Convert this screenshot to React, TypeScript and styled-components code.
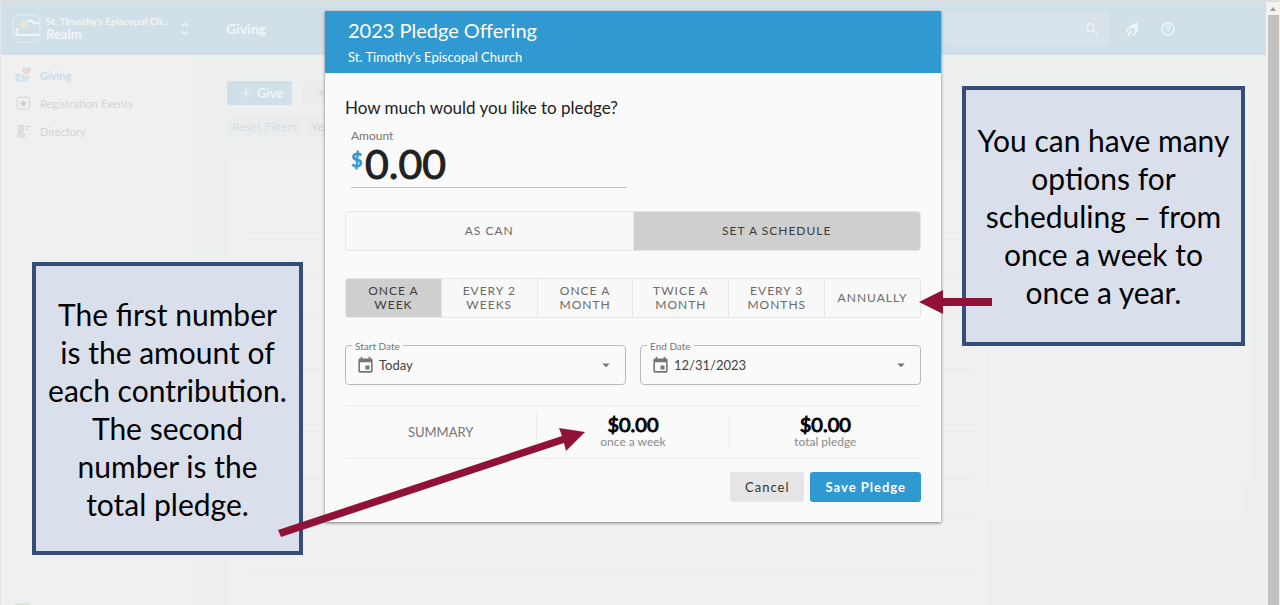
import React from 'react';
import styled, { createGlobalStyle, css } from 'styled-components';
import { MdEvent, MdArrowDropDown, MdSearch, MdHelpOutline, MdAdd } from 'react-icons/md';

const Global = createGlobalStyle`
  *, *::before, *::after { box-sizing: border-box; }
  body { margin: 0; overflow: hidden; font-family: Lato, "Liberation Sans", sans-serif; background: #f0f0f0; }
  button, input, select { font: inherit; margin: 0; }
  h1, h2, p { margin: 0; }
`;

const Screen = styled.div`
  position: relative;
  display: flex;
  min-height: 100vh;
  border-top: 2px solid #dcdfe0;
`;
const Shell = styled.div`
  flex: 1;
  display: flex;
  min-width: 0;
`;
const Sidebar = styled.aside`
  width: 199px;
  flex: none;
  display: flex;
  flex-direction: column;
  background: #f0f0f0;
  border-left: 1px solid #e4e6e6;
`;
const Brand = styled.div`
  height: 53px;
  display: flex;
  align-items: center;
  gap: 5px;
  padding: 0 10px 0 11px;
  background: #d1e0e8;
  color: #f2f5f6;
`;
const BrandText = styled.div`
  flex: 1;
  min-width: 0;
  font-weight: 700;
`;
const BrandOrg = styled.div`
  font-size: 10px;
  line-height: 12px;
  white-space: nowrap;
`;
const BrandName = styled.div`
  font-size: 13px;
  line-height: 15px;
`;
const Nav = styled.nav`
  display: flex;
  flex-direction: column;
  padding: 6px 14px;
`;
const NavLink = styled.a<{ $active?: boolean }>`
  display: flex;
  align-items: center;
  gap: 9px;
  height: 28px;
  font-size: 11px;
  text-decoration: none;
  color: ${(p) => (p.$active ? '#cadbe6' : '#d3d3d3')};
  font-weight: ${(p) => (p.$active ? 700 : 400)};
`;
const Swatch = styled.div`
  width: 15px;
  height: 2px;
  margin: auto 14px 0;
  background: #dfe6d2;
`;
const Main = styled.main`
  flex: 1;
  min-width: 0;
  display: flex;
  flex-direction: column;
  background: #eef0ef;
`;
const TopBar = styled.header`
  height: 53px;
  display: flex;
  align-items: center;
  padding: 0 90px 0 27px;
  background: #d1e0e8;
  color: #f2f5f6;
`;
const PageTitle = styled.h1`
  width: 200px;
  font-size: 14px;
  line-height: 18px;
`;
const Search = styled.div`
  flex: 1;
  height: 34px;
  display: flex;
  align-items: center;
  padding-right: 9px;
  border-radius: 5px;
  background: #d7e2ea;
`;
const SearchInput = styled.input`
  flex: 1;
  border: 0;
  background: none;
`;
const TopIcons = styled.div`
  display: flex;
  align-items: center;
  gap: 20px;
  padding-left: 15px;
`;
const Content = styled.div`
  flex: 1;
  display: flex;
  flex-direction: column;
  padding: 26px 13px 0 27px;
  border-left: 1px solid #ebecec;
`;
const Tools = styled.div`
  display: flex;
  gap: 10px;
  margin-bottom: 10px;
`;
const GiveButton = styled.button<{ $muted?: boolean }>`
  display: flex;
  align-items: center;
  gap: 4px;
  width: 65px;
  height: 24px;
  padding: 0 0 0 12px;
  border: 0;
  border-radius: 2px;
  font-size: 13px;
  font-weight: 700;
  background: ${(p) => (p.$muted ? '#ececec' : '#d1e0e8')};
  color: ${(p) => (p.$muted ? '#d8d8d8' : '#f2f5f6')};
`;
const Filters = styled.div`
  display: flex;
  gap: 4px;
  margin-bottom: 16px;
`;
const FilterButton = styled.button<{ $plain?: boolean }>`
  height: 22px;
  padding: 0 5px;
  border: 0;
  border-radius: 2px;
  background: #ebedec;
  font-size: 12px;
  color: ${(p) => (p.$plain ? '#d2d2d2' : '#d0dee6')};
`;
const Cards = styled.div`
  flex: 1;
  display: flex;
`;
const TableCard = styled.section`
  flex: 1;
  padding: 13px 14px 0 20px;
  border: 1px solid #ebecec;
  border-bottom: 0;
  border-radius: 6px 0 0 0;
  background: #f0f0f0;
`;
const SideColumn = styled.div`
  width: 264px;
  margin-left: -1px;
`;
const SideCard = styled.section`
  height: 331px;
  border-top: 1px solid #ebecec;
  border-radius: 0 6px 6px 0;
  background: #f0f0f0;
  box-shadow: 0 1px 2px #e6e8e7;
`;
const SideFoot = styled.div`
  position: relative;
  height: 33px;
  margin-right: 10px;
  background: #f0f0f0;
`;
const Row = styled.div<{ $h: number; $head?: boolean }>`
  height: ${(p) => p.$h}px;
  border-bottom: 1px solid #ebecec;
  background: ${(p) => (p.$head ? '#eef0f2' : 'none')};
`;
const ScrollRail = styled.div`
  width: 14px;
  display: flex;
  flex-direction: column;
  align-items: center;
  padding: 0 1px;
  background: #f2f2f2;
`;
const ScrollThumb = styled.div`
  flex: 1;
  width: 11px;
  background: #c1c1c1;
`;
const ScrollArrow = styled.svg`
  width: 12px;
  height: 13px;
  fill: #9a9a9a;
`;

const Overlay = styled.div`
  position: absolute;
  inset: 0 14px 0 0;
  display: flex;
  justify-content: center;
  align-items: flex-start;
  padding-top: 9px;
`;
const Stage = styled.div`
  position: relative;
  width: 616px;
`;
const Dialog = styled.form`
  background: #fafafa;
  box-shadow: 0 1px 3px rgba(0, 0, 0, 0.5);
`;
const DialogHead = styled.header`
  height: 62px;
  padding: 6px 23px 0;
  background: #3099d1;
  color: #fff;
`;
const DialogTitle = styled.h2`
  font-size: 20px;
  line-height: 26px;
  font-weight: 400;
`;
const DialogSub = styled.p`
  font-size: 13px;
  line-height: 28px;
`;
const DialogBody = styled.div`
  padding: 24px 20px 20px;
`;
const Question = styled.p`
  font-size: 17px;
  line-height: 22px;
  color: #212121;
`;
const AmountField = styled.label`
  display: block;
  width: 276px;
  margin: 10px 0 23px 6px;
  border-bottom: 1px solid #bdbdbd;
  font-size: 12px;
  line-height: 14px;
  color: #757575;
`;
const AmountRow = styled.span`
  display: flex;
  height: 44px;
`;
const Dollar = styled.span`
  width: 14px;
  font-size: 20px;
  line-height: 32px;
  color: #3099d1;
  -webkit-text-stroke: 1px #3099d1;
`;
const AmountInput = styled.input`
  flex: 1;
  min-width: 0;
  height: 42px;
  padding: 0;
  border: 0;
  background: none;
  color: #212121;
  font-size: 41px;
  line-height: 42px;
  -webkit-text-stroke: 1px #212121;
`;
const Toggle = styled.div`
  display: flex;
  height: 40px;
  margin-bottom: 27px;
  border: 1px solid #e6e6e6;
  border-radius: 3px;
  overflow: hidden;
`;
const ToggleButton = styled.button<{ $on?: boolean }>`
  flex: 1 1 0;
  padding: 0 12px;
  border: 0;
  font-size: 12px;
  line-height: 14px;
  letter-spacing: 1px;
  text-transform: uppercase;
  color: #6b6b6b;
  background: #f8f8f8;
  & + & { border-left: 1px solid #e6e6e6; }
  ${(p) => p.$on && css`
    background: #cfcfcf;
    color: #3c3c3c;
  `}
`;
const Dates = styled.div`
  display: flex;
  gap: 14px;
  margin-bottom: 20px;
`;
const DateField = styled.div`
  position: relative;
  flex: 1;
  height: 40px;
  display: flex;
  align-items: center;
  gap: 4px;
  padding: 0 10px;
  border: 1px solid #bababa;
  border-radius: 4px;
  color: #757575;
`;
const DateLabel = styled.label`
  position: absolute;
  top: -7px;
  left: 6px;
  padding: 0 3px;
  font-size: 10px;
  line-height: 14px;
  background: #fafafa;
`;
const DateSelect = styled.select`
  appearance: none;
  flex: 1;
  padding: 0;
  border: 0;
  background: none;
  font-size: 13px;
  color: #424242;
`;
const Summary = styled.div`
  display: flex;
  align-items: center;
  height: 54px;
  margin-bottom: 13px;
  border-top: 1px solid #ebebeb;
  border-bottom: 1px solid #ebebeb;
`;
const SummaryCell = styled.div`
  flex: 1 1 0;
  display: flex;
  flex-direction: column;
  align-items: center;
  justify-content: center;
  height: 38px;
  font-size: 13px;
  color: #757575;
  & + & { border-left: 1px solid #ebebeb; }
`;
const Total = styled.strong`
  font-size: 20px;
  line-height: 20px;
  font-weight: 400;
  color: #000;
  -webkit-text-stroke: 1px #000;
`;
const TotalNote = styled.span`
  font-size: 12px;
  line-height: 16px;
  color: #8a8a8a;
`;
const Actions = styled.div`
  display: flex;
  justify-content: flex-end;
  gap: 6px;
`;
const ActionButton = styled.button<{ $primary?: boolean }>`
  height: 30px;
  padding: 0 15px;
  border: 0;
  border-radius: 3px;
  font-size: 13px;
  letter-spacing: 1px;
  background: ${(p) => (p.$primary ? '#3099d1' : '#e5e5e5')};
  color: ${(p) => (p.$primary ? '#fff' : '#333')};
  font-weight: ${(p) => (p.$primary ? 700 : 400)};
`;

const Callout = styled.aside<{ $x: number; $y: number; $w: number; $h: number }>`
  position: absolute;
  left: ${(p) => p.$x}px;
  top: ${(p) => p.$y}px;
  width: ${(p) => p.$w}px;
  height: ${(p) => p.$h}px;
  display: flex;
  align-items: center;
  justify-content: center;
  border: 4px solid #344e78;
  background: #d9e0ec;
  color: #000;
  font-family: "Gill Sans MT", "Gill Sans", Lato, sans-serif;
  font-size: 30px;
  line-height: 38px;
  text-align: center;
  white-space: pre-line;
`;
const Arrows = styled.svg`
  position: absolute;
  left: 0;
  top: 0;
  width: 616px;
  height: 510px;
  overflow: visible;
  fill: #911237;
  pointer-events: none;
`;

const RealmLogo = () => (
  <svg width="29" height="29" viewBox="0 0 29 29" fill="none">
    <rect x="1" y="1" width="27" height="27" rx="6" stroke="#e6edf1" />
    <path d="M14 8c4-3 7-1 8 1.500 2-1 4-.5 5 .5M7 15c-4 1-4 6 0 6h20" stroke="#f2f5f6" strokeWidth="2" />
    <path d="M11.500 5l1.500 4.500 4.500 1.500-4.500 1.500L11.500 17 10 12.500 5.500 11 10 9.500z" fill="#f1e6cf" />
  </svg>
);
const UpDown = () => (
  <svg width="8" height="14" viewBox="0 0 8 14" fill="none" stroke="#f2f5f6" strokeWidth="1.500">
    <path d="M1 4.500l3-3 3 3M1 9.500l3 3 3-3" />
  </svg>
);
const GivingIcon = () => (
  <svg width="16" height="16" viewBox="0 0 16 16">
    <path d="M11.500 7.500C8 5 7.500 4 7.500 2.700 7.500.8 10 .3 11.500 2 13 .3 15.500.8 15.500 2.700 15.500 4 15 5 11.500 7.500z" fill="#ecd9d6" stroke="#e3c9c5" strokeWidth=".8" />
    <path d="M1 7.500h2.500v6.500H1zM3.500 8h3.500l2.500 1.500c.8.800 0 1.700-1 1.500H7M9.500 11l3.500-1.200c1.500-.3 2 .9 1 1.500L10.500 14h-7" fill="#dde7ec" stroke="#c8dce7" />
  </svg>
);
const EventIcon = () => (
  <svg width="16" height="16" viewBox="0 0 16 16" fill="none" stroke="#d8d8d8">
    <rect x="2" y="2.500" width="12.500" height="11.500" rx="1" />
    <path d="M5 1v2M11.500 1v2" />
    <path d="M8.250 4.500l1.100 2.400 2.600.3-1.900 1.700.5 2.600-2.300-1.300-2.300 1.300.5-2.600-1.900-1.700 2.600-.3z" fill="#cecece" stroke="none" />
  </svg>
);
const DirectoryIcon = () => (
  <svg width="16" height="16" viewBox="0 0 16 16" fill="#e2e2e2" stroke="#d5d5d5">
    <circle cx="6" cy="5" r="3" />
    <path d="M2.500 14c0-4 1-5.500 3.500-5.500s3.500 1.500 3.500 5.500zM10.500 3.500H16M10.500 6.500H14" />
  </svg>
);
const FlameIcon = () => (
  <svg width="16" height="18" viewBox="0 0 16 18" fill="#f2f5f6">
    <path d="M12.800 1.500C12 4 7 4.500 5 7c-2.500 2-3.500 4.500-2.500 7.500.3-2.500 1.500-4.500 3.500-6l2-1c0 1.200.8 1.500 1.500 1.200C10.300 8.300 10.500 7.500 11 7c.5 3.500-1 6.500-3.500 9.500 4.500-2 6.500-5.500 6.500-9.500 0-2-.3-4-1.200-5.500z" />
    <path d="M7.500 10C5 11.500 3.200 13.500 4.200 16.500 6 15.500 7.800 13 7.500 10z" />
  </svg>
);

const periods = ['Once a week', 'Every 2 weeks', 'Once a month', 'Twice a month', 'Every 3 months', 'Annually'];
const rows = [38, 38, 54, 55, 54, 37, 55];

const DatePicker = ({ id, label, value }: { id: string; label: string; value: string }) => (
  <DateField>
    <DateLabel htmlFor={id}>{label}</DateLabel>
    <MdEvent size={19} />
    <DateSelect id={id}><option>{value}</option></DateSelect>
    <MdArrowDropDown size={18} />
  </DateField>
);

export default function App() {
  return (
    <Screen>
      <Global />
      <Shell>
        <Sidebar>
          <Brand>
            <RealmLogo />
            <BrandText>
              <BrandOrg>St. Timothy's Episcopal Ch...</BrandOrg>
              <BrandName>Realm</BrandName>
            </BrandText>
            <UpDown />
          </Brand>
          <Nav>
            <NavLink href="#giving" $active><GivingIcon />Giving</NavLink>
            <NavLink href="#events"><EventIcon />Registration Events</NavLink>
            <NavLink href="#directory"><DirectoryIcon />Directory</NavLink>
          </Nav>
          <Swatch />
        </Sidebar>
        <Main>
          <TopBar>
            <PageTitle>Giving</PageTitle>
            <Search>
              <SearchInput aria-label="Search" />
              <MdSearch size={16} />
            </Search>
            <TopIcons>
              <FlameIcon />
              <MdHelpOutline size={16} />
            </TopIcons>
          </TopBar>
          <Content>
            <Tools>
              <GiveButton><MdAdd size={14} />Give</GiveButton>
              <GiveButton $muted aria-label="Add"><MdAdd size={14} /></GiveButton>
            </Tools>
            <Filters>
              <FilterButton>Reset Filters</FilterButton>
              <FilterButton $plain>Year</FilterButton>
            </Filters>
            <Cards>
              <TableCard>
                <Row $h={73} $head />
                {rows.map((h, i) => <Row key={i} $h={h} />)}
              </TableCard>
              <SideColumn>
                <SideCard />
                <SideFoot />
              </SideColumn>
            </Cards>
          </Content>
        </Main>
      </Shell>
      <ScrollRail>
        <ScrollArrow viewBox="0 0 12 13"><path d="M3 9l3-4 3 4z" /></ScrollArrow>
        <ScrollThumb />
      </ScrollRail>

      <Overlay>
        <Stage>
          <Dialog>
            <DialogHead>
              <DialogTitle>2023 Pledge Offering</DialogTitle>
              <DialogSub>St. Timothy's Episcopal Church</DialogSub>
            </DialogHead>
            <DialogBody>
              <Question>How much would you like to pledge?</Question>
              <AmountField>
                Amount
                <AmountRow>
                  <Dollar>$</Dollar>
                  <AmountInput defaultValue="0.00" />
                </AmountRow>
              </AmountField>
              <Toggle>
                <ToggleButton type="button">As can</ToggleButton>
                <ToggleButton type="button" $on>Set a schedule</ToggleButton>
              </Toggle>
              <Toggle>
                {periods.map((p, i) => (
                  <ToggleButton type="button" key={p} $on={i === 0}>{p}</ToggleButton>
                ))}
              </Toggle>
              <Dates>
                <DatePicker id="start" label="Start Date" value="Today" />
                <DatePicker id="end" label="End Date" value="12/31/2023" />
              </Dates>
              <Summary>
                <SummaryCell>SUMMARY</SummaryCell>
                <SummaryCell><Total>$0.00</Total><TotalNote>once a week</TotalNote></SummaryCell>
                <SummaryCell><Total>$0.00</Total><TotalNote>total pledge</TotalNote></SummaryCell>
              </Summary>
              <Actions>
                <ActionButton type="button">Cancel</ActionButton>
                <ActionButton type="button" $primary>Save Pledge</ActionButton>
              </Actions>
            </DialogBody>
          </Dialog>
          <Callout $x={-293} $y={251} $w={271} $h={293}>
            {'The first number\nis the amount of\neach contribution.\nThe second\nnumber is the\ntotal pledge.'}
          </Callout>
          <Callout $x={637} $y={75} $w={283} $h={260}>
            {'You can have many\noptions for\nscheduling – from\nonce a week to\nonce a year.'}
          </Callout>
          <Arrows viewBox="0 0 616 510">
            <path d="M594 291l24-12v8h49v8h-49v8z" />
            <path d="M-47 519L237 425l-3-8 26 4-19 19-2-8-283 94z" />
          </Arrows>
        </Stage>
      </Overlay>
    </Screen>
  );
}
